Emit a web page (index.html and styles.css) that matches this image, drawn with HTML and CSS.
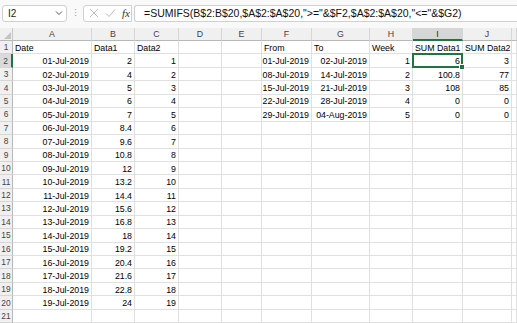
FILE: index.html
```html
<!DOCTYPE html>
<html lang="en">

<head>
    <meta charset="UTF-8">
    <meta name="viewport" content="width=device-width, initial-scale=1.0">
    <title>Book1 - Excel</title>
    <link rel="stylesheet" href="styles.css">
</head>

<body>
    <div class="topbar">
        <div class="namebox">
            <span>I2</span>
            <svg class="chevron" width="8" height="6" viewBox="0 0 8 6">
                <path d="M1 1.5 L4 4.5 L7 1.5" fill="none" stroke="#555" stroke-width="1"/>
            </svg>
        </div>
        <div class="dots">⋮</div>
        <div class="fxbox">
            <svg width="10" height="10" viewBox="0 0 10 10">
                <path d="M1 1 L9 9 M9 1 L1 9" stroke="#b5b5b5" stroke-width="0.9"/>
            </svg>
            <svg width="11" height="10" viewBox="0 0 11 10">
                <path d="M1 5.5 L4 8.5 L10 1.5" fill="none" stroke="#b5b5b5" stroke-width="0.9"/>
            </svg>
            <span class="fx">fx</span>
        </div>
        <div class="formula">=SUMIFS(B$2:B$20,$A$2:$A$20,"&gt;="&amp;$F2,$A$2:$A$20,"&lt;="&amp;$G2)</div>
    </div>

    <div class="sheet" id="sheet"></div>

    <script>
        var sheet = document.getElementById("sheet");
        var letters = ["A", "B", "C", "D", "E", "F", "G", "H", "I", "J", ""];

        var data1 = [2, 4, 5, 6, 7, 8.4, 9.6, 10.8, 12, 13.2, 14.4, 15.6, 16.8, 18, 19.2, 20.4, 21.6, 22.8, 24];
        var weeks = [
            ["01-Jul-2019", "02-Jul-2019", 1, 6, 3],
            ["08-Jul-2019", "14-Jul-2019", 2, 100.8, 77],
            ["15-Jul-2019", "21-Jul-2019", 3, 108, 85],
            ["22-Jul-2019", "28-Jul-2019", 4, 0, 0],
            ["29-Jul-2019", "04-Aug-2019", 5, 0, 0]
        ];

        function pad(n) {
            return n < 10 ? "0" + n : "" + n;
        }

        var rows = [["Date", "Data1", "Data2", "", "", "From", "To", "Week", "SUM Data1", "SUM Data2", ""]];
        for (var i = 0; i < 20; i++) {
            var row = ["", "", "", "", "", "", "", "", "", "", ""];
            if (i < 19) {
                row[0] = pad(i + 1) + "-Jul-2019";
                row[1] = data1[i];
                row[2] = i + 1;
            }
            if (i < 5) {
                row[5] = weeks[i][0];
                row[6] = weeks[i][1];
                row[7] = weeks[i][2];
                row[8] = weeks[i][3];
                row[9] = weeks[i][4];
            }
            rows.push(row);
        }

        function addCell(cls, text) {
            var el = document.createElement("div");
            el.className = cls;
            el.textContent = text;
            sheet.appendChild(el);
            return el;
        }

        // column header row
        addCell("corner", "");
        letters.forEach(letter => {
            addCell(letter === "I" ? "col-head active" : "col-head", letter);
        });

        rows.forEach((row, r) => {
            addCell(r === 1 ? "row-head active" : "row-head", r + 1);
            row.forEach((value, c) => {
                var cls = r === 0 ? "cell" : "cell num";
                if (r === 1 && c === 8) cls += " selected";
                addCell(cls, value);
            });
        });
    </script>
</body>

</html>
```

FILE: styles.css
```css
body {
    margin: 0;
    padding: 0;
    width: 517px;
    height: 323px;
    overflow: hidden;
    background: #fff;
    font-family: "Liberation Sans", Arial, sans-serif;
}

.topbar {
    display: flex;
    align-items: center;
    height: 28px;
    padding: 0 0 0 2px;
    background: #f9f9f9;
    box-sizing: border-box;
}

.namebox {
    display: flex;
    align-items: center;
    justify-content: space-between;
    width: 65px;
    height: 17px;
    margin-top: -2px;
    padding: 0 3px 0 5px;
    box-sizing: border-box;
    background: #fff;
    border: 1px solid #d0d0d0;
    border-radius: 3px;
    font-size: 10px;
    color: #222;
}

.dots {
    width: 16px;
    margin-top: -2px;
    text-align: center;
    font-size: 9px;
    color: #999;
}

.fxbox {
    display: flex;
    align-items: center;
    gap: 6px;
    width: 49px;
    height: 17px;
    margin-top: -2px;
    padding-left: 5px;
    box-sizing: border-box;
    background: #fff;
    border: 1px solid #d0d0d0;
    border-radius: 3px 0 0 3px;
}

.fx {
    font-family: "Liberation Serif", "Times New Roman", serif;
    font-style: italic;
    font-size: 11px;
    color: #333;
}

.formula {
    flex: 1;
    height: 17px;
    margin-top: -2px;
    margin-left: 2px;
    padding-left: 9px;
    box-sizing: border-box;
    background: #fff;
    border: 1px solid #d0d0d0;
    border-right: none;
    border-radius: 3px 0 0 3px;
    font-size: 10.5px;
    line-height: 15px;
    color: #111;
    white-space: nowrap;
    overflow: hidden;
}

.sheet {
    display: grid;
    grid-template-columns: 13px 79px 43px 44px 43px 40px 50px 58px 43px 50px 49px 5px;
    grid-template-rows: 13px repeat(21, 13.45px);
    font-size: 8.8px;
}

.corner {
    position: relative;
    background: #f0f0f0;
    border-right: 1px solid #c8c8c8;
    border-bottom: 1px solid #b8b8b8;
}

.corner::after {
    content: "";
    position: absolute;
    right: 1px;
    bottom: 1px;
    border-left: 7px solid transparent;
    border-bottom: 7px solid #c4c4c4;
}

.col-head {
    display: flex;
    align-items: center;
    justify-content: center;
    background: #f0f0f0;
    border-right: 1px solid #d6d6d6;
    border-bottom: 1px solid #b8b8b8;
    color: #444;
}

.col-head.active {
    background: #d6d6d6;
    border-bottom: 2px solid #217346;
    color: #222;
}

.row-head {
    display: flex;
    align-items: center;
    justify-content: center;
    background: #f0f0f0;
    border-right: 1px solid #b8b8b8;
    border-bottom: 1px solid #d6d6d6;
    color: #444;
    font-size: 8.4px;
}

.row-head.active {
    background: #dadada;
    border-right: 2px solid #217346;
}

.cell {
    display: flex;
    align-items: center;
    padding: 1px 2px 0 2px;
    border-right: 1px solid #e0e0e0;
    border-bottom: 1px solid #e0e0e0;
    white-space: nowrap;
    overflow: hidden;
    color: #000;
    min-width: 0;
}

.cell.num {
    justify-content: flex-end;
}

.cell.selected {
    position: relative;
    overflow: visible;
}

.cell.selected::after {
    content: "";
    position: absolute;
    left: -1px;
    top: -1px;
    right: -1px;
    bottom: -1px;
    border: 2px solid #217346;
}

.cell.selected::before {
    content: "";
    position: absolute;
    right: -3px;
    bottom: -3px;
    width: 4px;
    height: 4px;
    background: #217346;
    border: 1px solid #fff;
    z-index: 1;
}
```
